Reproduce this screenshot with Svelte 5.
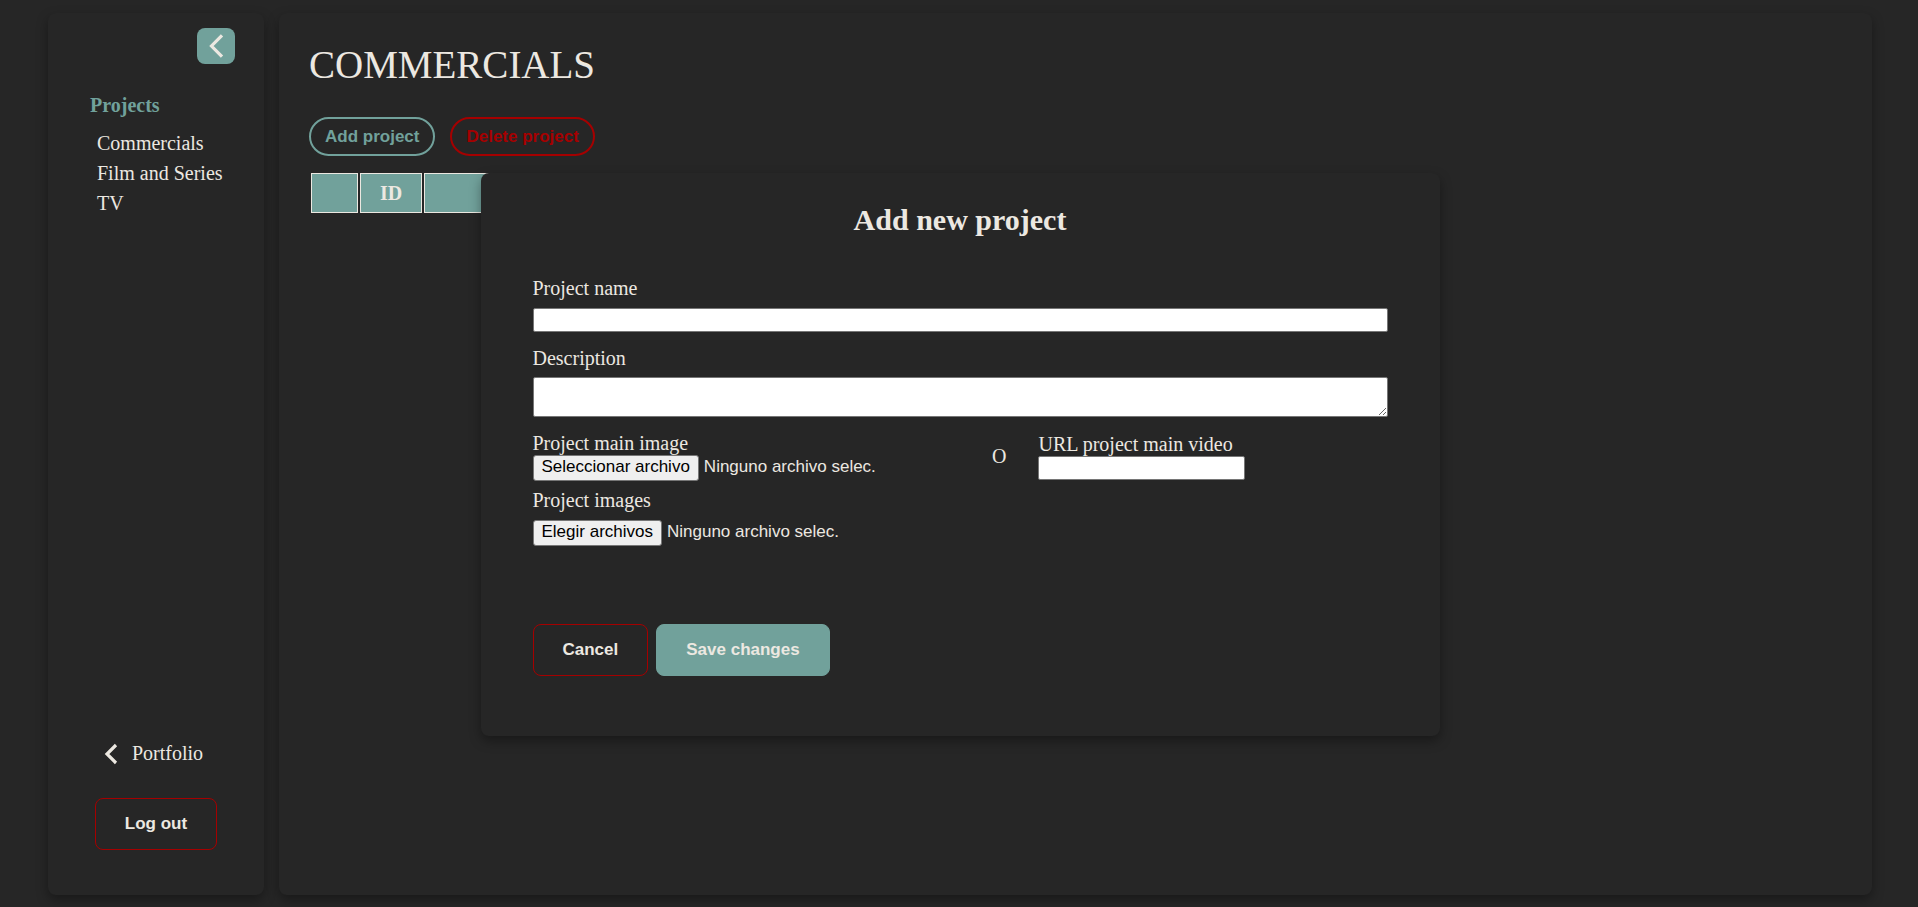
<script>
  let projectName = $state('');
  let description = $state('');
  let videoUrl = $state('');
  const sections = ['Commercials', 'Film and Series', 'TV'];
</script>

<div class="page">
  <aside class="card sidebar">
    <button class="toggle" type="button" aria-label="Collapse menu">
      <svg viewBox="0 0 16 26" width="16" height="26" aria-hidden="true">
        <path d="M14 2.3 L3.5 13 L14 23.7" />
      </svg>
    </button>
    <nav>
      <h2>Projects</h2>
      <ul>
        {#each sections as section}
          <li><a href="#top">{section}</a></li>
        {/each}
      </ul>
    </nav>
    <div class="foot">
      <a class="portfolio" href="#top">
        <svg viewBox="0 0 14 22" width="14" height="22" aria-hidden="true">
          <path d="M12 2 L3 11 L12 20" />
        </svg>
        Portfolio
      </a>
      <button class="btn outline" type="button">Log out</button>
    </div>
  </aside>

  <main class="card content">
    <h1>COMMERCIALS</h1>
    <div class="actions">
      <button class="pill" type="button">Add project</button>
      <button class="pill danger" type="button">Delete project</button>
    </div>
    <table>
      <thead>
        <tr><th class="check"></th><th class="id">ID</th><th class="name"></th></tr>
      </thead>
    </table>
  </main>

  <div class="card modal" role="dialog" aria-labelledby="modal-title">
    <h2 id="modal-title">Add new project</h2>
    <form>
      <label for="name">Project name</label>
      <input id="name" class="full" type="text" bind:value={projectName} />
      <label for="description">Description</label>
      <textarea id="description" class="full" bind:value={description}></textarea>
      <div class="media">
        <div class="column image">
          <label for="main-image">Project main image</label>
          <label class="file">
            <input id="main-image" type="file" />
            <span class="pick">Seleccionar archivo</span>
            <span>Ninguno archivo selec.</span>
          </label>
        </div>
        <span>O</span>
        <div class="column">
          <label for="video">URL project main video</label>
          <input id="video" class="url" type="text" bind:value={videoUrl} />
        </div>
      </div>
      <label for="images">Project images</label>
      <label class="file spaced">
        <input id="images" type="file" multiple />
        <span class="pick">Elegir archivos</span>
        <span>Ninguno archivo selec.</span>
      </label>
      <div class="buttons">
        <button class="btn outline" type="button">Cancel</button>
        <button class="btn solid" type="button">Save changes</button>
      </div>
    </form>
  </div>
</div>

<style>
  :global(body) {
    background: #262626;
  }
  .page {
    --teal: #71a19b;
    --cream: #ece8e1;
    --red: #a50000;
    box-sizing: border-box;
    min-height: 100vh;
    padding: 13px 46px 12px 48px;
    display: flex;
    gap: 15px;
    color: var(--cream);
    font: 20px/23px "Liberation Serif", "Times New Roman", serif;
  }
  .card {
    box-sizing: border-box;
    background: #262626;
    border-radius: 8px;
    box-shadow: 0 5px 12px rgba(0, 0, 0, 0.35);
  }
  h1, h2, ul {
    margin: 0;
    padding: 0;
  }
  a {
    color: inherit;
    text-decoration: none;
  }
  button, input, textarea, .file {
    font-family: "Liberation Sans", Arial, sans-serif;
    font-size: 17px;
  }
  svg {
    fill: none;
    stroke: var(--cream);
    stroke-width: 3.2;
  }
  .sidebar {
    width: 216px;
    flex-shrink: 0;
    padding: 15px 29px 45px;
    display: flex;
    flex-direction: column;
  }
  .toggle {
    align-self: flex-end;
    width: 38px;
    height: 36px;
    padding: 0;
    border: 0;
    border-radius: 8px;
    background: var(--teal);
    display: flex;
    align-items: center;
    justify-content: center;
  }
  nav {
    margin-top: 30px;
    padding-left: 13px;
  }
  nav h2 {
    color: var(--teal);
    font-size: 20px;
    line-height: 23px;
  }
  nav ul {
    list-style: none;
    margin-top: 11px;
    padding-left: 7px;
  }
  nav li {
    line-height: 30px;
    white-space: nowrap;
  }
  .foot {
    margin-top: auto;
    display: flex;
    flex-direction: column;
    align-items: center;
    gap: 33px;
  }
  .portfolio {
    display: flex;
    align-items: center;
    gap: 14px;
    margin-right: 5px;
  }
  .btn {
    box-sizing: border-box;
    height: 52px;
    padding: 0 29px;
    border: 1px solid var(--teal);
    border-radius: 8px;
    color: var(--cream);
    font-weight: bold;
  }
  .outline {
    background: transparent;
    border-color: var(--red);
  }
  .solid {
    background: var(--teal);
  }
  .content {
    flex: 1;
    padding: 29px 30px;
  }
  h1 {
    font-size: 39px;
    font-weight: normal;
    line-height: 46px;
  }
  .actions {
    display: flex;
    gap: 15px;
    margin: 29px 0 15px;
  }
  .pill {
    height: 39px;
    padding: 0 14px;
    border: 2px solid var(--teal);
    border-radius: 20px;
    background: transparent;
    color: var(--teal);
    font-weight: bold;
  }
  .danger {
    border-color: var(--red);
    color: var(--red);
  }
  table {
    border-spacing: 2px;
  }
  th {
    box-sizing: border-box;
    height: 40px;
    padding: 0;
    border: 1px solid var(--cream);
    background: var(--teal);
  }
  .check {
    width: 47px;
  }
  .id {
    width: 62px;
  }
  .name {
    width: 180px;
  }
  .modal {
    position: absolute;
    top: 173px;
    left: 25%;
    right: 25%;
    margin: 0 -1px 0 1px;
    padding: 30px 52px 60px;
  }
  .modal h2 {
    margin-bottom: 40px;
    font-size: 30px;
    line-height: 34px;
    text-align: center;
  }
  form, .column {
    display: flex;
    flex-direction: column;
  }
  input, textarea {
    box-sizing: border-box;
    margin: 0;
    border: 1px solid #767676;
    border-radius: 2px;
    background: #fff;
  }
  input {
    height: 24px;
  }
  .full {
    margin: 8px 0 15px;
  }
  textarea {
    height: 40px;
  }
  textarea.full {
    margin-top: 7px;
  }
  .media {
    display: flex;
    align-items: center;
    gap: 32px;
    margin-bottom: 8px;
  }
  .image {
    width: 50%;
  }
  .url {
    width: 207px;
  }
  .file {
    position: relative;
    display: flex;
    align-items: baseline;
    gap: 5px;
    line-height: 22px;
  }
  .file input {
    position: absolute;
    width: 100%;
    opacity: 0;
  }
  .pick {
    box-sizing: border-box;
    height: 26px;
    padding: 0 8px;
    border: 1px solid #767676;
    border-radius: 3px;
    background: #efefef;
    color: #000;
  }
  .spaced {
    margin-top: 8px;
  }
  .buttons {
    display: flex;
    gap: 8px;
    margin-top: 78px;
  }
</style>
